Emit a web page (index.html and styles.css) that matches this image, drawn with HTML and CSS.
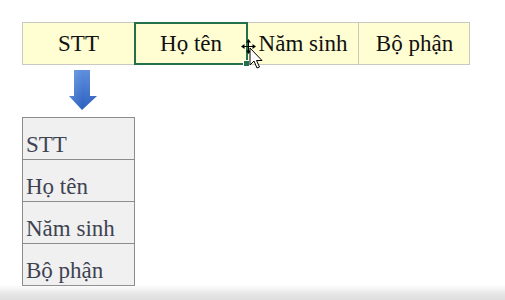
FILE: index.html
```html
<!DOCTYPE html>
<html lang="vi">
<head>
<meta charset="utf-8">
<link rel="stylesheet" href="styles.css">
</head>
<body>
<div class="stage">
  <div class="header-row">
    <div class="hcell">STT</div>
    <div class="hcell selected">Họ tên<span class="handle"></span></div>
    <div class="hcell">Năm sinh</div>
    <div class="hcell">Bộ phận</div>
  </div>
  <div class="arrow-wrap">
    <svg class="arrow" width="30" height="42" viewBox="0 0 30 42">
      <defs>
        <linearGradient id="ag" x1="0" y1="0" x2="0" y2="1">
          <stop offset="0" stop-color="#5d8fdc"/>
          <stop offset="1" stop-color="#2c5fc2"/>
        </linearGradient>
        <linearGradient id="ah" x1="0" y1="0" x2="1" y2="0">
          <stop offset="0" stop-color="#ffffff" stop-opacity="0.15"/>
          <stop offset="0.5" stop-color="#ffffff" stop-opacity="0"/>
          <stop offset="1" stop-color="#000000" stop-opacity="0.08"/>
        </linearGradient>
      </defs>
      <path d="M6 1 H22 V27 H29 L14 41 L1 27 H6 Z" fill="url(#ag)"/>
      <path d="M6 1 H22 V27 H29 L14 41 L1 27 H6 Z" fill="url(#ah)"/>
    </svg>
  </div>
  <div class="col">
    <div class="vcell">STT</div>
    <div class="vcell">Họ tên</div>
    <div class="vcell">Năm sinh</div>
    <div class="vcell">Bộ phận</div>
  </div>
  <svg class="cursor" width="24" height="34" viewBox="0 0 24 34">
    <g fill="#000">
      <rect x="8" y="6" width="1" height="9"/>
      <rect x="4" y="10" width="9" height="1"/>
      <path d="M8.5 3 L6 6.5 H11 Z"/>
      <path d="M8.5 18 L6 14.5 H11 Z"/>
      <path d="M1 10.5 L4.5 8 V13 Z"/>
      <path d="M16 10.5 L12.5 8 V13 Z"/>
    </g>
    <path d="M10 12 V29 L14 25 L17 32 L19.5 31 L16.5 24.5 H22 Z" fill="#fff" stroke="#000" stroke-width="1"/>
  </svg>
  <div class="bottom-bar"></div>
</div>
</body>
</html>
```
FILE: styles.css
```css
html, body {
  margin: 0;
  padding: 0;
  background: #ffffff;
}
.stage {
  position: relative;
  width: 505px;
  height: 300px;
  overflow: hidden;
  font-family: "Liberation Serif", "Times New Roman", serif;
  padding: 22px 0 0 22px;
  box-sizing: border-box;
}
.header-row {
  display: flex;
  width: 448px;
  height: 43px;
  background: #fffdd2;
  border: 1px solid #c9c9c4;
  box-sizing: border-box;
}
.hcell {
  position: relative;
  flex: none;
  display: flex;
  align-items: center;
  justify-content: center;
  font-size: 23px;
  color: #111;
  border-right: 1px solid #c9c9c4;
  box-sizing: border-box;
  height: 41px;
}
.hcell:nth-child(1) { width: 112px; }
.hcell:nth-child(2) { width: 113px; }
.hcell:nth-child(3) { width: 111px; }
.hcell:nth-child(4) { width: 111px; border-right: none; }
.hcell.selected {
  border: 2px solid #23714a;
  margin: -1px 0 -1px -1px;
  height: 43px;
  width: 114px;
}
.handle {
  position: absolute;
  right: -4px;
  bottom: -4px;
  width: 5px;
  height: 5px;
  background: #23714a;
  border: 1px solid #fff;
}
.arrow-wrap {
  display: flex;
  padding: 4px 0 0 46px;
  height: 52px;
  box-sizing: border-box;
}
.col {
  width: 113px;
  border: 1px solid #8c8c8c;
  box-sizing: border-box;
  background: #f0f0f0;
}
.vcell {
  height: 42px;
  box-sizing: border-box;
  border-bottom: 1px solid #8c8c8c;
  font-size: 23px;
  color: #3e4352;
  display: flex;
  align-items: flex-end;
  padding: 0 0 3px 3px;
  line-height: 1;
}
.vcell:last-child {
  border-bottom: none;
  height: 41px;
}
.cursor {
  position: absolute;
  left: 240px;
  top: 36px;
}
.bottom-bar {
  position: absolute;
  left: 0;
  right: 0;
  bottom: 0;
  height: 15px;
  background: linear-gradient(to bottom, rgba(230,230,230,0) 0%, #e6e6e6 60%, #dedede 100%);
}
```
